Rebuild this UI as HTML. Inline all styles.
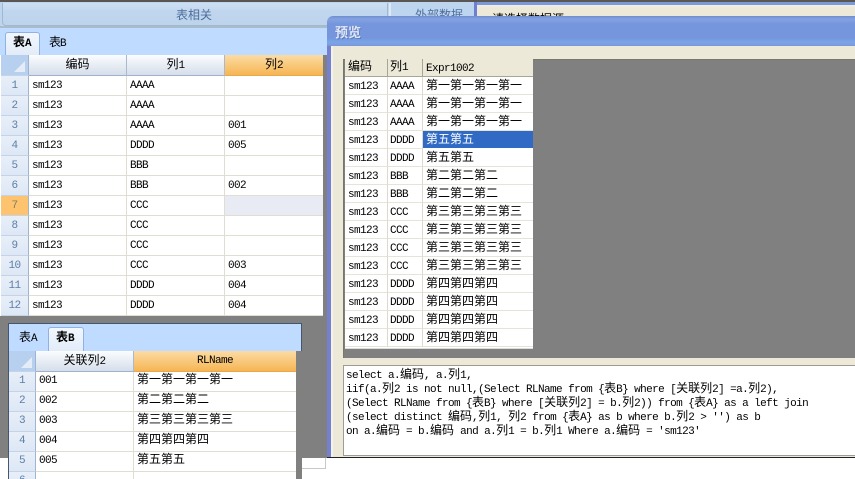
<!DOCTYPE html>
<html><head><meta charset="utf-8">
<style>
html,body{margin:0;padding:0;background:#fff}
#p{position:relative;width:855px;height:479px;overflow:hidden;background:#808080;font:11px/1 "Liberation Mono","WenQuanYi Zen Hei","Noto Sans CJK SC",monospace;letter-spacing:-.6px;color:#000}
.a{position:absolute;display:block}
s{text-decoration:none;font-size:12px;letter-spacing:0;font-family:"WenQuanYi Zen Hei","Noto Sans CJK SC",sans-serif}
.g .r{position:absolute;left:0;display:flex;height:20px;width:100%;box-sizing:border-box;background:#fff}
.g .r>*{display:block;box-sizing:border-box;height:20px;line-height:19px;padding-left:3px;border-right:1px solid #e0ded2;border-bottom:1px solid #e0ded2;font-style:normal;font-weight:normal;white-space:nowrap;overflow:hidden}
.g .r>i{text-align:center;padding:0;background:linear-gradient(#e8eff9,#dde7f5);color:#5d7fa6;border-right:1px solid #9fb4cf;border-bottom:1px solid #c5d3e6}
.g .h>*{background:linear-gradient(#fbfdff,#d5deeb);text-align:center;padding:0;border-right:1px solid #a9b8cc;border-bottom:1px solid #9fb2cc}
.g .h>i{background:#b7d0ef;position:relative}
.g .h>i:after{content:"";position:absolute;right:3px;bottom:3px;border-style:solid;border-width:0 0 11px 11px;border-color:transparent transparent #e3ecf7 transparent}
.g .h>.o{background:linear-gradient(#fbdca5,#f6b553);border-right:0;border-bottom:1px solid #e8a84c}
.ga .r>i{width:28px}.ga .r>b{width:98px}.ga .r>b:last-child{width:98px;border-right:0}
.ga .r:not(.h)>*{padding-top:1px}
.gb .r>i{width:27px}.gb .r>b:nth-child(2){width:98px}.gb .r>b:nth-child(3){width:162px;border-right:0}
.gb .r:not(.h) s{position:relative;top:-3px}
.gp .r{height:18px;background:#fff}
.gp .r>*{height:18px;line-height:17px;background:#fff;border-right:1px solid #ddd9cc;border-bottom:1px solid #e6e3d8;padding-left:3px}
.gp .r:not(.h)>*{padding-top:2px}
.gp .r:not(.h) s{position:relative;top:-3px}
.gp .r>:nth-child(1){width:43px}.gp .r>:nth-child(2){width:35px;padding-left:2px}.gp .r>:nth-child(3){width:110px;border-right:0}
.gp .h>*{background:#ece9d8;text-align:left;border-right:1px solid #a8a595;border-bottom:1px solid #a8a595;padding-left:3px;line-height:13px}
.gp .h>:nth-child(3){background:#ece9d8;padding-top:2px;line-height:17px}
.sel{background:#316ac5!important;color:#fff;border-bottom-color:#fff!important}
pre{margin:0;font:inherit}
</style></head><body><div id="p">

<!-- top band -->
<div class="a" style="left:0;top:0;width:855px;height:2px;background:#5a5654"></div>
<div class="a" style="left:0;top:2px;width:475px;height:26px;background:#bdd5ee"></div>
<div class="a" style="left:2px;top:3px;width:386px;height:23px;box-sizing:border-box;border:1px solid #9fb9cf;border-top:0;border-radius:0 0 4px 4px;background:linear-gradient(#cfe0f3 0,#c0d6ee 40%,#bdd4ec);color:#4c6e9d;text-align:center;line-height:26px;font-size:12px;letter-spacing:0;font-family:'WenQuanYi Zen Hei','Noto Sans CJK SC',sans-serif"><s style="position:absolute;left:173px;top:4px;line-height:16px;font-size:12px">表相关</s></div>
<div class="a" style="left:0;top:26px;width:330px;height:2px;background:#a9bccb"></div>
<div class="a" style="left:389px;top:3px;width:2px;height:25px;background:#dfe9f5"></div>
<s class="a" style="left:415px;top:9px;color:#4c6e9d">外部数据</s>
<div class="a" style="left:475px;top:2px;width:380px;height:3px;background:#7b98d8"></div>
<div class="a" style="left:474px;top:2px;width:3px;height:16px;background:#6f7fcf"></div>
<div class="a" style="left:477px;top:5px;width:378px;height:12px;background:linear-gradient(#f0eee8 0,#ece9d8 30%)"></div>
<s class="a" style="left:492px;top:13px">请选择数据源</s>

<!-- tab strip A -->
<div class="a" style="left:0;top:28px;width:330px;height:27px;background:#bfdbff"></div>
<div class="a" style="left:5px;top:32px;width:35px;height:23px;box-sizing:border-box;background:linear-gradient(#f2f7fd,#e2ecf8);border:1px solid #8db2e3;border-bottom:0;border-radius:3px 3px 0 0"></div>
<s class="a" style="left:13px;top:36px;font-weight:bold">表</s><span class="a" style="left:25px;top:39px;font-weight:bold">A</span>
<s class="a" style="left:49px;top:36px">表</s><span class="a" style="left:60px;top:39px">B</span>

<!-- grid A -->
<div class="a" style="left:0;top:55px;width:1px;height:261px;background:#fff"></div>
<div class="a g ga" style="left:1px;top:55px;width:322px;height:261px;background:#fff">
<div class="r h" style="top:0;height:21px"><i style="height:21px"></i><b style="height:21px;line-height:17px"><s>编码</s></b><b style="height:21px;line-height:17px"><s>列</s>1</b><b class="o" style="height:21px;line-height:17px"><s>列</s>2</b></div>
<div class="r" style="top:21px"><i>1</i><b>sm123</b><b>AAAA</b><b></b></div>
<div class="r" style="top:41px"><i>2</i><b>sm123</b><b>AAAA</b><b></b></div>
<div class="r" style="top:61px"><i>3</i><b>sm123</b><b>AAAA</b><b>001</b></div>
<div class="r" style="top:81px"><i>4</i><b>sm123</b><b>DDDD</b><b>005</b></div>
<div class="r" style="top:101px"><i>5</i><b>sm123</b><b>BBB</b><b></b></div>
<div class="r" style="top:121px"><i>6</i><b>sm123</b><b>BBB</b><b>002</b></div>
<div class="r" style="top:141px"><i style="background:#fdc36e;color:#8a7a5a">7</i><b>sm123</b><b>CCC</b><b style="background:#e8ebf4"></b></div>
<div class="r" style="top:161px"><i>8</i><b>sm123</b><b>CCC</b><b></b></div>
<div class="r" style="top:181px"><i>9</i><b>sm123</b><b>CCC</b><b></b></div>
<div class="r" style="top:201px"><i>10</i><b>sm123</b><b>CCC</b><b>003</b></div>
<div class="r" style="top:221px"><i>11</i><b>sm123</b><b>DDDD</b><b>004</b></div>
<div class="r" style="top:241px"><i>12</i><b>sm123</b><b>DDDD</b><b>004</b></div>
</div>

<!-- bottom white / lines -->
<div class="a" style="left:0;top:458px;width:9px;height:21px;background:#fff"></div>
<div class="a" style="left:302px;top:458px;width:553px;height:21px;background:#fff"></div>
<div class="a" style="left:302px;top:458px;width:24px;height:11px;box-sizing:border-box;border-right:1px solid #c8c8c8;border-bottom:1px solid #c8c8c8"></div>

<!-- panel B -->
<div class="a" style="left:8px;top:323px;width:294px;height:28px;box-sizing:border-box;background:#bfdbff;border:1px solid #45576f;border-bottom:0"></div>
<div class="a" style="left:48px;top:327px;width:36px;height:24px;box-sizing:border-box;background:linear-gradient(#f2f7fd,#e2ecf8);border:1px solid #8db2e3;border-bottom:0;border-radius:3px 3px 0 0"></div>
<s class="a" style="left:19px;top:331px">表</s><span class="a" style="left:31px;top:334px">A</span>
<s class="a" style="left:56px;top:331px;font-weight:bold">表</s><span class="a" style="left:68px;top:334px;font-weight:bold">B</span>
<div class="a" style="left:8px;top:351px;width:1px;height:128px;background:#45576f"></div>
<div class="a g gb" style="left:9px;top:351px;width:287px;height:128px;background:#fff;overflow:hidden">
<div class="r h" style="top:0;height:21px"><i style="height:21px"></i><b style="height:21px;line-height:17px"><s>关联列</s>2</b><b class="o" style="height:21px;line-height:21px">RLName</b></div>
<div class="r" style="top:21px"><i>1</i><b>001</b><b><s>第一第一第一第一</s></b></div>
<div class="r" style="top:41px"><i>2</i><b>002</b><b><s>第二第二第二</s></b></div>
<div class="r" style="top:61px"><i>3</i><b>003</b><b><s>第三第三第三第三</s></b></div>
<div class="r" style="top:81px"><i>4</i><b>004</b><b><s>第四第四第四</s></b></div>
<div class="r" style="top:101px"><i>5</i><b>005</b><b><s>第五第五</s></b></div>
<div class="r" style="top:121px"><i>6</i><b></b><b></b></div>
</div>

<!-- dialog -->
<div class="a" style="left:327px;top:16px;width:528px;height:442px;background:#ece9d8;border-radius:6px 0 0 0;overflow:hidden;border-bottom:1px solid #222;box-sizing:border-box">
  <div class="a" style="left:0;top:0;width:528px;height:30px;background:linear-gradient(#6f8ecf 0,#84a2e2 3px,#7596dd 8px,#7596dd 22px,#78a6e6 26px,#7e9be0 29px,#7d90d8 30px)"></div>
  <div class="a" style="left:0;top:30px;width:4px;height:412px;background:#7480d0"></div>
  <div class="a" style="left:4px;top:30px;width:2px;height:412px;background:#f3f1e8"></div>
  <div class="a" style="left:16px;top:43px;width:512px;height:299px;background:#808080;border-top:1px solid #77776a;border-left:1px solid #77776a;box-sizing:border-box"></div>
  <div class="a" style="left:16px;top:349px;width:512px;height:91px;box-sizing:border-box;background:#fff;border:1px solid #9c9c90;border-right:0"></div>
</div>
<s class="a" style="left:335px;top:25px;color:#dfe6f6;font-size:13px;font-weight:bold;text-shadow:1px 1px 0 #5f7cbf">预览</s>

<div class="a g gp" style="left:345px;top:59px;width:188px;height:289px;background:#fff;border-bottom:1px solid #ddd">
<div class="r h" style="top:0"><b><s>编码</s></b><b><s>列</s>1</b><b>Expr1002</b></div>
<div class="r" style="top:18px"><b>sm123</b><b>AAAA</b><b><s>第一第一第一第一</s></b></div>
<div class="r" style="top:36px"><b>sm123</b><b>AAAA</b><b><s>第一第一第一第一</s></b></div>
<div class="r" style="top:54px"><b>sm123</b><b>AAAA</b><b><s>第一第一第一第一</s></b></div>
<div class="r" style="top:72px"><b>sm123</b><b>DDDD</b><b class="sel"><s>第五第五</s></b></div>
<div class="r" style="top:90px"><b>sm123</b><b>DDDD</b><b><s>第五第五</s></b></div>
<div class="r" style="top:108px"><b>sm123</b><b>BBB</b><b><s>第二第二第二</s></b></div>
<div class="r" style="top:126px"><b>sm123</b><b>BBB</b><b><s>第二第二第二</s></b></div>
<div class="r" style="top:144px"><b>sm123</b><b>CCC</b><b><s>第三第三第三第三</s></b></div>
<div class="r" style="top:162px"><b>sm123</b><b>CCC</b><b><s>第三第三第三第三</s></b></div>
<div class="r" style="top:180px"><b>sm123</b><b>CCC</b><b><s>第三第三第三第三</s></b></div>
<div class="r" style="top:198px"><b>sm123</b><b>CCC</b><b><s>第三第三第三第三</s></b></div>
<div class="r" style="top:216px"><b>sm123</b><b>DDDD</b><b><s>第四第四第四</s></b></div>
<div class="r" style="top:234px"><b>sm123</b><b>DDDD</b><b><s>第四第四第四</s></b></div>
<div class="r" style="top:252px"><b>sm123</b><b>DDDD</b><b><s>第四第四第四</s></b></div>
<div class="r" style="top:270px"><b>sm123</b><b>DDDD</b><b><s>第四第四第四</s></b></div>
</div>

<pre class="a" style="left:346px;top:368px;line-height:12px">select a.<s>编码</s>, a.<s>列</s>1,
iif(a.<s>列</s>2 is not null,(Select RLName from {<s>表</s>B} where [<s>关联列</s>2] =a.<s>列</s>2),
(Select RLName from {<s>表</s>B} where [<s>关联列</s>2] = b.<s>列</s>2)) from {<s>表</s>A} as a left join
(select distinct <s>编码</s>,<s>列</s>1, <s>列</s>2 from {<s>表</s>A} as b where b.<s>列</s>2 &gt; '') as b
on a.<s>编码</s> = b.<s>编码</s> and a.<s>列</s>1 = b.<s>列</s>1 Where a.<s>编码</s> = 'sm123'</pre>

</div></body></html>
